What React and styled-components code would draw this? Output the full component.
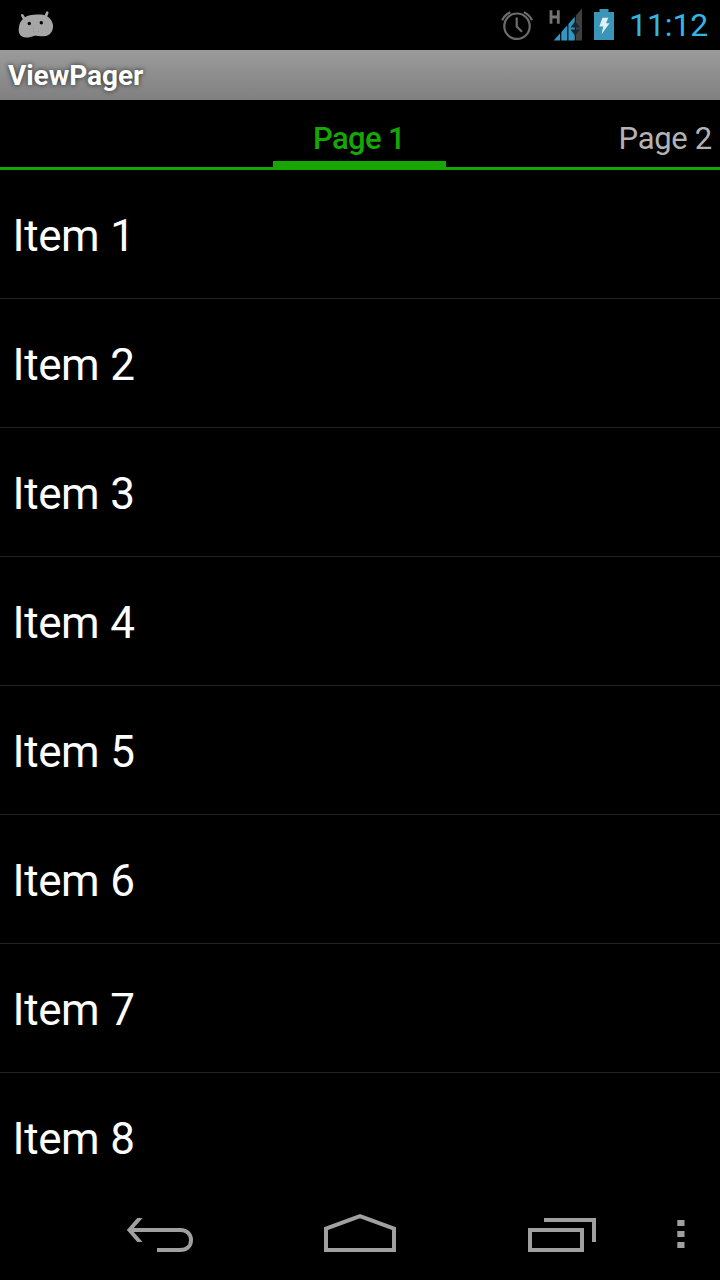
import React from 'react';
import styled, { createGlobalStyle } from 'styled-components';

const GlobalStyle = createGlobalStyle`
  * { box-sizing: border-box; }
  html, body { margin: 0; padding: 0; background: #000; }
  body { font-family: Roboto, "Liberation Sans", sans-serif; overflow: hidden; }
`;

const Screen = styled.div`
  width: 720px;
  height: 1280px;
  display: flex;
  flex-direction: column;
  background: #000;
  overflow: hidden;
`;

const StatusBar = styled.header`
  height: 50px;
  flex: none;
  display: flex;
  align-items: flex-start;
  justify-content: space-between;
  padding: 0 11px 0 16px;
`;

const StatusIcons = styled.div`
  display: flex;
  align-items: flex-start;
`;

const Icon = styled.svg`
  display: block;
  flex: none;
`;

const Clock = styled.time`
  width: 80px;
  margin-left: 12px;
  font-size: 32px;
  font-weight: 400;
  line-height: 51px;
  letter-spacing: -0.1px;
  color: #33b5e5;
  white-space: nowrap;
`;

const TitleBar = styled.h1`
  height: 50px;
  flex: none;
  margin: 0;
  padding-left: 8px;
  background: linear-gradient(#9b9b9b, #808080);
  color: #fff;
  font-size: 28px;
  font-weight: 700;
  line-height: 51px;
  letter-spacing: -0.05px;
  text-shadow: 0 0 5px rgba(0, 0, 0, 0.75);
`;

const TabStrip = styled.nav`
  height: 70px;
  flex: none;
  display: grid;
  grid-template-columns: 273px 173px 1fr;
  border-bottom: 3px solid #16a705;
`;

const Tab = styled.span`
  grid-column: ${(p) => p.$column};
  padding: 9px ${(p) => (p.$active ? '1px' : '8px')} 0 0;
  text-align: ${(p) => (p.$active ? 'center' : 'right')};
  border-bottom: ${(p) => (p.$active ? '6px solid #16a705' : '0')};
  color: ${(p) => (p.$active ? '#16a705' : '#b3b3b3')};
  font-size: 31px;
  font-weight: ${(p) => (p.$active ? 500 : 400)};
  line-height: 60px;
  height: 67px;
  letter-spacing: ${(p) => (p.$active ? '-0.6px' : '-0.3px')};
  white-space: nowrap;
`;

const List = styled.ul`
  flex: 1;
  min-height: 0;
  margin: 0;
  padding: 0;
  list-style: none;
  overflow: hidden;
`;

const Item = styled.li`
  height: 129px;
  padding-left: 12.6px;
  border-bottom: 1px solid #222;
  color: #fff;
  font-size: 44px;
  line-height: 133px;
  letter-spacing: -0.4px;
  word-spacing: 0.4px;
`;

const NavBar = styled.footer`
  height: 96px;
  flex: none;
  display: flex;
  padding: 16px 0 0 110px;
  gap: 100px;
  background: #000;
`;

const NavButton = styled.button`
  width: ${(p) => p.$width}px;
  height: 70px;
  padding: 0;
  border: 0;
  background: none;
  color: #a0a0a0;
`;

const MenuButton = styled(NavButton)`
  margin-left: -50px;
`;

const ITEMS = [1, 2, 3, 4, 5, 6, 7, 8];

function AndroidHead() {
  return (
    <Icon width="40" height="50" viewBox="16 0 40 50">
      <path d="M22.3 15.4 L25 20 M47.2 12.8 L45.3 17.5" stroke="#a6a6a6" strokeWidth="2.8" strokeLinecap="round" />
      <path
        d="M24 18 C28 14.5 34 14.3 41 14.6 C47 15 51.5 18.5 53 25 C53.5 31 50 36 44 36.3 C39 36.5 36 35.4 33.5 36 C30 37.5 27 38 23.5 37 C19.5 36 18 32 19 27 C19.4 23 21 20.5 24 18 Z"
        fill="#a6a6a6"
      />
      <circle cx="29.3" cy="23.5" r="1.7" fill="#000" />
      <circle cx="41.3" cy="22.7" r="1.7" fill="#000" />
      <path d="M33 28h1v1h-1zM33 31h1v1h-1zM38 31h1v1h-1z" fill="#929292" />
    </Icon>
  );
}

function AlarmIcon() {
  return (
    <Icon width="45" height="50" viewBox="498 0 45 50" fill="none" stroke="#6c6c6c" strokeWidth="2.2">
      <circle cx="517" cy="26.2" r="12.7" />
      <path d="M516.7 17.5 V26.5 L522 31.8" />
      <path d="M502.2 20.3 Q504.5 14.8 510.4 12.3 M523.8 12.3 Q529.5 14.8 532 20.3" />
    </Icon>
  );
}

function SignalIcon() {
  return (
    <Icon width="46" height="50" viewBox="543 0 46 50">
      <path d="M551 10.3 V23.7 M558.3 10.3 V23.7 M551 17 H558.3" stroke="#747474" strokeWidth="2.8" />
      <path
        d="M553.7 40.5 L560.1 33.3 V40.5 Z M561.3 32 L567.3 25.2 V40.5 H561.3 Z M568.4 24 L574.8 16.8 V40.5 H568.4 Z"
        fill="#3396c0"
      />
      <path d="M575.8 15.6 L582 8.6 V40.5 H575.8 Z" fill="#404040" />
      <path d="M570.4 27.5 L575.2 21.3 L580 27.5 Z M570.4 29.5 H580 L575.2 35.8 Z" fill="#142730" />
    </Icon>
  );
}

function BatteryIcon() {
  return (
    <Icon width="28" height="50" viewBox="589 0 28 50">
      <path d="M594 12 H599.5 V9 H608.5 V12 H614 V40 H594 Z" fill="#3a95b8" />
      <path d="M602.5 17.8 H608.3 L606 23.2 H609.6 L601.5 34.3 L603.3 26.4 H599.3 Z" fill="#e0f0f6" />
    </Icon>
  );
}

function BackIcon() {
  return (
    <Icon width="100" height="70" fill="none">
      <path d="M20 30 H70.5 C77 30 81 34.5 81 40 C81 46 77 50 70 50 H47" stroke="currentColor" strokeWidth="4" />
      <path d="M27.3 18 H32.6 L22 30 L32.6 42 H27.3 L16.8 30 Z" fill="currentColor" />
    </Icon>
  );
}

function HomeIcon() {
  return (
    <Icon width="100" height="70">
      <path d="M16 28.6 L50 16.1 L84 28.6 V50 H16 Z" fill="none" stroke="currentColor" strokeWidth="4" />
    </Icon>
  );
}

function RecentIcon() {
  return (
    <Icon width="100" height="70" fill="none" stroke="currentColor" strokeWidth="4">
      <path d="M20 30 H72 V50 H20 Z M34 20 H86 M84 18 V42" />
    </Icon>
  );
}

function MenuIcon() {
  return (
    <Icon width="50" height="70">
      <path d="M17.3 20h7.2v6h-7.2z M17.3 31h7.2v6h-7.2z M17.3 42h7.2v6h-7.2z" fill="currentColor" />
    </Icon>
  );
}

export default function App() {
  return (
    <Screen>
      <GlobalStyle />
      <StatusBar>
        <AndroidHead />
        <StatusIcons>
          <AlarmIcon />
          <SignalIcon />
          <BatteryIcon />
          <Clock>11:12</Clock>
        </StatusIcons>
      </StatusBar>
      <TitleBar>ViewPager</TitleBar>
      <TabStrip>
        <Tab $active $column={2}>Page 1</Tab>
        <Tab $column={3}>Page 2</Tab>
      </TabStrip>
      <List>
        {ITEMS.map((n) => (
          <Item key={n}>Item {n}</Item>
        ))}
      </List>
      <NavBar>
        <NavButton $width={100} aria-label="Back"><BackIcon /></NavButton>
        <NavButton $width={100} aria-label="Home"><HomeIcon /></NavButton>
        <NavButton $width={100} aria-label="Recent apps"><RecentIcon /></NavButton>
        <MenuButton $width={50} aria-label="Menu"><MenuIcon /></MenuButton>
      </NavBar>
    </Screen>
  );
}
